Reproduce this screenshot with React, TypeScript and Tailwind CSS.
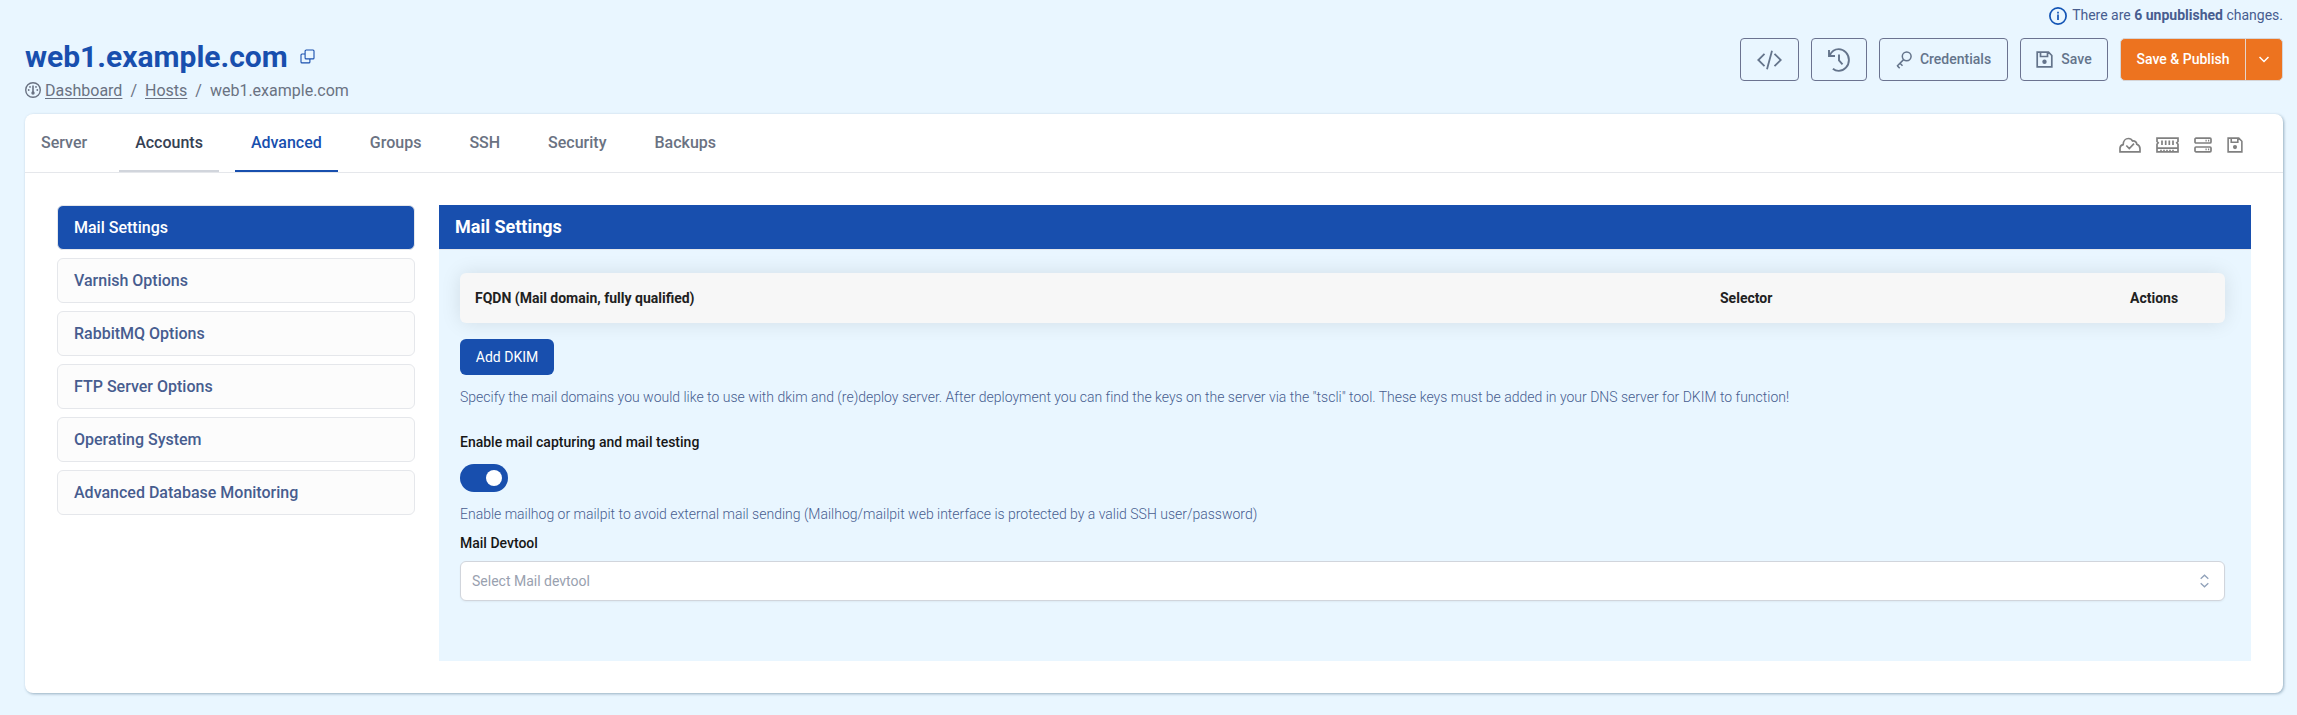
import React from "react";

const tabs = ["Server", "Accounts", "Advanced", "Groups", "SSH", "Security", "Backups"];
const sections = ["Mail Settings", "Varnish Options", "RabbitMQ Options", "FTP Server Options", "Operating System", "Advanced Database Monitoring"];

function tabClass(tab: string) {
  if (tab === "Accounts") return "border-gray-300 text-gray-700";
  if (tab === "Advanced") return "border-[#184fae] text-[#184fae]";
  return "border-transparent text-gray-500";
}

function GaugeIcon() {
  return (
    <svg className="size-4" viewBox="0 0 16 16" fill="none" stroke="currentColor" strokeWidth="1.4">
      <circle cx="8" cy="8" r="7.3" />
      <circle cx="8" cy="11" r="1.700" fill="currentColor" stroke="none" />
      <path d="M8 11V3.500" strokeWidth="1.600" />
      <g fill="currentColor" stroke="none">
        <circle cx="3.700" cy="8" r=".9" />
        <circle cx="12.300" cy="8" r=".9" />
        <circle cx="5" cy="4.900" r=".9" />
        <circle cx="11" cy="4.900" r=".9" />
      </g>
    </svg>
  );
}

function CopyIcon() {
  return (
    <svg className="h-[15px] w-[15px]" viewBox="0 0 15 15" fill="none" stroke="currentColor" strokeWidth="1.1">
      <rect x="5.1" y="1" width="8.9" height="8.9" rx="1" />
      <path d="M5 5H2a1 1 0 0 0-1 1v6.9a1 1 0 0 0 1 1h6.9a1 1 0 0 0 1-1V10" />
    </svg>
  );
}

function InfoIcon() {
  return (
    <svg className="size-[18px] text-[#1254b5]" viewBox="0 0 18 18" fill="none" stroke="currentColor" strokeWidth="1.700">
      <circle cx="9" cy="9" r="8.100" />
      <path d="M9 7.500v5.500M9 4.800v1.600" />
    </svg>
  );
}

function CodeIcon() {
  return (
    <svg className="h-5 w-[25px]" viewBox="0 0 25 20" fill="none" stroke="currentColor" strokeWidth="1.800">
      <path d="M7.500 3.800 1.300 10l6.200 6.200M17.500 3.800l6.200 6.200-6.200 6.200M15 .8 10 19.200" />
    </svg>
  );
}

function HistoryIcon() {
  return (
    <svg className="h-6 w-[22px]" viewBox="0 0 22 24" fill="none" stroke="currentColor" strokeWidth="1.900">
      <path d="M1 2v6h6M1.600 7.600C3.400 3.600 6.900 1.100 10.700 1.100 16.300 1.100 20.900 6 20.900 12s-4.600 10.900-10.200 10.900c-2.200 0-4.100-.7-5.800-2.200M11 6.500v6l3.500 3.800" />
    </svg>
  );
}

function KeyIcon() {
  return (
    <svg className="h-[18px] w-[16px]" viewBox="0 0 16 18" fill="none" stroke="currentColor" strokeWidth="1.500">
      <circle cx="10.700" cy="5.300" r="4.400" />
      <path d="M7.600 8.600 1 15.300M4 12.300l2.500 2.500M1.400 14.900l2.300 2.300" />
    </svg>
  );
}

function FloppyIcon({ className }: { className: string }) {
  return (
    <svg className={className} viewBox="0 0 17 17" fill="none" stroke="currentColor" strokeWidth="1.700">
      <path d="M1.200 1.200h11.300l3.300 3.300v11.300H1.200zM4.500 1.200v4.300h7V1.200" />
      <circle cx="8.500" cy="10.700" r="2.200" fill="currentColor" stroke="none" />
    </svg>
  );
}

function CloudIcon() {
  return (
    <svg className="h-[16px] w-[22px]" viewBox="0 0 22 16" fill="none" stroke="currentColor" strokeWidth="1.700">
      <path d="M1 14.800v-3.500c0-2 1.500-3.300 3.200-3.700 0-3.500 2.200-6.100 5.300-6.100 2 0 3.300 1 4.100 2.500 2.400-.3 4 1.200 4.200 3.300 2 .7 3.200 2.300 3.200 4.500v3zM7.300 8.500l3 3 4.700-4.800" />
    </svg>
  );
}

function MemoryIcon() {
  return (
    <svg className="h-[16px] w-[23px]" viewBox="0 0 23 16" fill="none" stroke="currentColor" strokeWidth="1.700">
      <path d="M1 1.200h21v3.300l-1.200 1.200 1.200 1.500v7.600H1V7.200l1.200-1.500L1 4.500zM1 11.200h21" />
      <path d="M6 3.500v4.500M9.700 3.500v4.500M13.300 3.500v4.500M17 3.500v4.500" />
      <path d="M4 13.300h15" strokeWidth="1" strokeDasharray="2 1" />
    </svg>
  );
}

function ServersIcon() {
  return (
    <svg className="h-[16px] w-[18px]" viewBox="0 0 18 16" fill="none" stroke="currentColor" strokeWidth="1.700">
      <rect x="1" y="1.200" width="16" height="4.800" rx="1" />
      <rect x="1" y="10" width="16" height="4.800" rx="1" />
      <path d="M11.500 3.600h1.200M14 3.600h1.200M11.500 12.400h1.200M14 12.400h1.200" />
    </svg>
  );
}

export default function App() {
  const outline = "flex h-[43px] items-center justify-center rounded-[4px] border border-[#6b7390] text-sm font-medium text-[#64748b]";
  return (
    <div className="h-[715px] w-[2297px] overflow-hidden bg-[#e9f6ff] pr-[14px] pl-[25px] font-['Roboto',sans-serif]">
      <header className="flex h-[114px] justify-between">
        <div className="pt-[36px]">
          <div className="flex h-10 items-center gap-3 text-[#184fae]">
            <h1 className="pt-0.5 text-[30px] leading-10 font-bold">web1.example.com</h1>
            <CopyIcon />
          </div>
          <nav className="flex h-7 items-center text-base text-gray-500">
            <GaugeIcon />
            <div className="ml-1 flex pt-0.5">
              <a className="underline underline-offset-2">Dashboard</a>
              <span className="mx-2">/</span>
              <a className="underline underline-offset-2">Hosts</a>
              <span className="mx-2">/</span>
              <span>web1.example.com</span>
            </div>
          </nav>
        </div>
        <div className="flex flex-col items-end">
          <p className="flex h-8 items-center gap-[5px] text-sm text-[#475d8f]">
            <InfoIcon />
            <span className="pb-0.5">There are <b className="font-bold">6 unpublished</b> changes.</span>
          </p>
          <div className="mt-[6px] flex gap-3">
            <button className={outline + " w-[59px]"}><CodeIcon /></button>
            <button className={outline + " w-[56px]"}><HistoryIcon /></button>
            <button className={outline + " w-[129px] gap-2"}><KeyIcon /><span className="pb-0.5">Credentials</span></button>
            <button className={outline + " w-[88px] gap-2"}><FloppyIcon className="size-[17px]" /><span className="pb-0.5">Save</span></button>
            <div className="flex h-[43px] overflow-hidden rounded-[5px] border border-[#d5d5d8] bg-[#ed731f] text-sm font-medium text-white">
              <button className="w-[125px] border-r border-[#e5d5cc] pb-0.5">Save &amp; Publish</button>
              <button className="flex w-[36px] items-center justify-center">
                <svg className="h-[7px] w-[10px]" viewBox="0 0 10 7" fill="none" stroke="currentColor" strokeWidth="1.500"><path d="m.5 1 4.500 4.500L9.500 1" /></svg>
              </button>
            </div>
          </div>
        </div>
      </header>

      <main className="h-[579px] rounded-lg bg-white shadow-[1px_1px_3px_rgba(30,70,100,.4)]">
        <div className="flex h-[59px] justify-between border-b border-gray-200">
          <nav className="flex gap-4">
            {tabs.map((tab) => (
              <a key={tab} className={"h-[58px] border-b-2 px-4 pt-[17px] text-base font-medium " + tabClass(tab)}>{tab}</a>
            ))}
          </nav>
          <div className="flex items-center gap-[15px] pt-1 pr-10 text-[#808080]">
            <CloudIcon />
            <MemoryIcon />
            <ServersIcon />
            <FloppyIcon className="size-4" />
          </div>
        </div>
        <div className="flex gap-6 pt-8 pr-8 pl-8">
          <aside className="flex w-[358px] flex-col gap-2">
            {sections.map((section) => (
              <a key={section} className={"flex h-[45px] items-center rounded-md border border-gray-200 px-4 pt-px text-base font-medium " + (section === "Mail Settings" ? "bg-[#184fae] text-white" : "bg-[#fcfcfc] text-[#475d8f]")}>{section}</a>
            ))}
          </aside>
          <section className="h-[456px] flex-1 bg-[#e9f6ff]">
            <h2 className="flex h-[45px] items-center border-b border-gray-200 bg-[#184fae] px-4 text-lg font-bold text-white">Mail Settings</h2>
            <div className="flex flex-col items-start pt-[23px] pr-[26px] pl-[21px] text-sm">
              <div className="flex h-[50px] w-full items-center rounded-md bg-[#f7f7f7] px-[15px] font-bold text-[#212121] shadow-[0_0_20px_rgba(0,0,0,.1)]">
                <span className="w-[1245px]">FQDN (Mail domain, fully qualified)</span>
                <span className="w-[410px]">Selector</span>
                <span>Actions</span>
              </div>
              <button className="mt-4 h-9 w-[94px] rounded-md bg-[#184fae] text-white">Add DKIM</button>
              <p className="mt-3 h-5 leading-5 font-light tracking-[-0.006px] text-[#475d8f]">Specify the mail domains you would like to use with dkim and (re)deploy server. After deployment you can find the keys on the server via the "tscli" tool. These keys must be added in your DNS server for DKIM to function!</p>
              <h3 className="mt-[25px] h-5 leading-5 font-medium text-[#171717]">Enable mail capturing and mail testing</h3>
              <button role="switch" aria-checked="true" className="mt-3 flex h-7 w-12 items-center justify-end rounded-full bg-[#184fae] px-1.5"><span className="size-4 rounded-full bg-white" /></button>
              <p className="mt-3 h-5 leading-5 font-light tracking-[-0.006px] text-[#475d8f]">Enable mailhog or mailpit to avoid external mail sending (Mailhog/mailpit web interface is protected by a valid SSH user/password)</p>
              <h3 className="mt-[9px] h-5 leading-5 font-medium text-[#171717]">Mail Devtool</h3>
              <div className="mt-2 flex h-10 w-full items-center justify-between rounded-md border border-gray-300 bg-white pr-[15px] pl-[11px] text-gray-400 shadow-xs">
                <span>Select Mail devtool</span>
                <svg className="h-[14px] w-[9px] text-slate-400" viewBox="0 0 9 14" fill="none" stroke="currentColor" strokeWidth="1.300"><path d="m.7 4.700 3.800-3.500 3.800 3.500M.7 9.300l3.800 3.500 3.800-3.500" /></svg>
              </div>
            </div>
          </section>
        </div>
      </main>
    </div>
  );
}
